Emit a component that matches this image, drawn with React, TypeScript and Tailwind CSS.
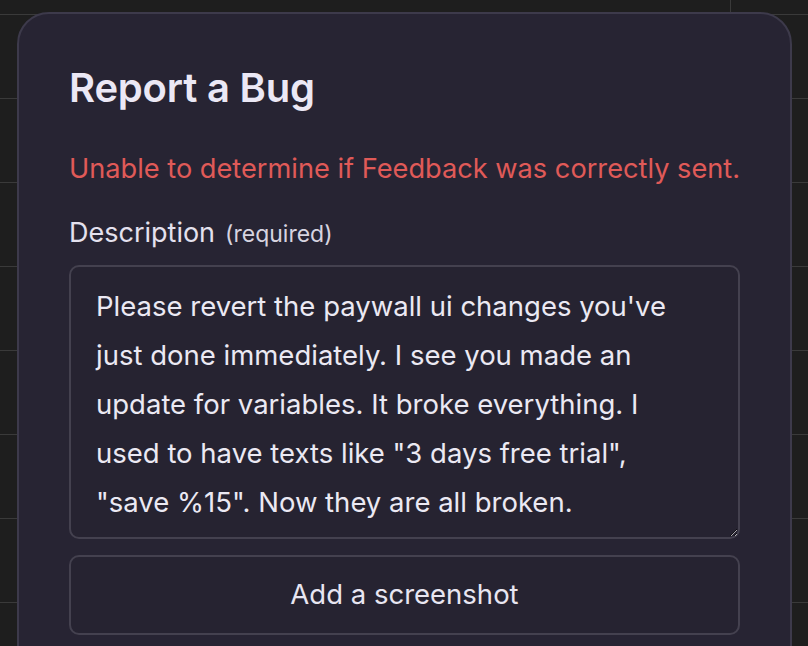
import React from "react";

export default function App() {
  return (
    <div
      className="relative h-[646px] w-[808px] overflow-hidden bg-[#1e1e1e] bg-[linear-gradient(#3a3a3a_1px,transparent_1px)] bg-[length:100%_84px] bg-[position:0_14px] pl-[17px] pt-[12px]"
      style={{ fontFamily: "Inter, 'Noto Sans', sans-serif" }}
    >
      <div className="absolute left-[730px] top-0 h-[13px] w-px bg-[#3a3a3a]" />
      <div className="relative h-[700px] w-[775px] rounded-[32px] border-2 border-[#3d3a4b] bg-[#272433] px-[50px] pt-[50px]">
        <h1 className="text-[40px] font-semibold leading-[48px] tracking-[-0.2px] text-[#ebe8f5]">
          Report a Bug
        </h1>
        <p className="mt-[40px] whitespace-nowrap text-[27.2px] leading-[34px] text-[#e05a58]">
          Unable to determine if Feedback was correctly sent.
        </p>
        <div className="mt-[30px] flex items-baseline gap-[10px] text-[#e4e1ee]">
          <span className="text-[27px] leading-[34px]">Description</span>
          <span className="text-[23px] leading-[34px] text-[#d7d4e0]">(required)</span>
        </div>
        <textarea
          readOnly
          className="mt-[14px] block h-[274px] w-full resize-y overflow-hidden rounded-[10px] border-2 border-[#44414f] bg-[#262331] pb-[10px] pl-[25px] pr-[40px] pt-[15px] text-[27.5px] leading-[49px] text-[#ebe9f3] outline-none"
          value={`Please revert the paywall ui changes you've just done immediately. I see you made an update for variables. It broke everything. I used to have texts like "3 days free trial", "save %15". Now they are all broken.`}
        />
        <button className="mt-[16px] flex h-[80px] w-full items-center justify-center rounded-[10px] border-2 border-[#44414f] bg-[#262331] text-[27.5px] text-[#e8e6f1]">
          Add a screenshot
        </button>
      </div>
    </div>
  );
}
